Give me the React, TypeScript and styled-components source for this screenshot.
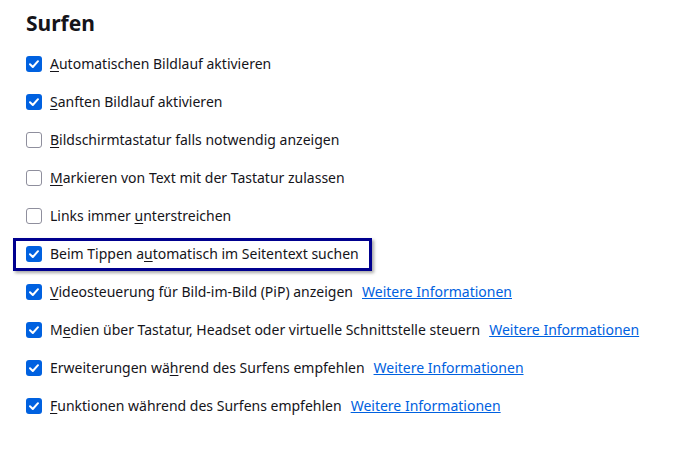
import React from 'react'
import styled, { createGlobalStyle } from 'styled-components'

const GlobalStyle = createGlobalStyle`
  html, body {
    margin: 0;
    padding: 0;
    background: #ffffff;
  }
  body {
    font-family: "Noto Sans", "Open Sans", sans-serif;
    color: #15141a;
  }
`

type Item = {
  label: string
  at: number // index of the access key letter
  checked: boolean
  link?: boolean
  focused?: boolean
}

const items: Item[] = [
  { label: 'Automatischen Bildlauf aktivieren', at: 0, checked: true },
  { label: 'Sanften Bildlauf aktivieren', at: 0, checked: true },
  { label: 'Bildschirmtastatur falls notwendig anzeigen', at: 0, checked: false },
  { label: 'Markieren von Text mit der Tastatur zulassen', at: 0, checked: false },
  { label: 'Links immer unterstreichen', at: 12, checked: false },
  { label: 'Beim Tippen automatisch im Seitentext suchen', at: 13, checked: true, focused: true },
  { label: 'Videosteuerung für Bild-im-Bild (PiP) anzeigen', at: 0, checked: true, link: true },
  { label: 'Medien über Tastatur, Headset oder virtuelle Schnittstelle steuern', at: 1, checked: true, link: true },
  { label: 'Erweiterungen während des Surfens empfehlen', at: 16, checked: true, link: true },
  { label: 'Funktionen während des Surfens empfehlen', at: 0, checked: true, link: true },
]

export default function App() {
  return (
    <>
      <GlobalStyle />
      <Page>
        <Heading>Surfen</Heading>
        <List>
          {items.map((item, i) => (
            <Row key={i}>
              <Option $focused={item.focused}>
                <Box $checked={item.checked}>
                  {item.checked && (
                    <svg width="12" height="12" viewBox="0 0 12 12">
                      <path d="M2 6.3 L4.8 9 L10 3.2" fill="none" stroke="#fff" strokeWidth="2" strokeLinecap="round" strokeLinejoin="round" />
                    </svg>
                  )}
                </Box>
                <Label>
                  {item.label.slice(0, item.at)}
                  <AccessKey>{item.label.charAt(item.at)}</AccessKey>
                  {item.label.slice(item.at + 1)}
                </Label>
              </Option>
              {item.link && <MoreLink href="#">Weitere Informationen</MoreLink>}
            </Row>
          ))}
        </List>
      </Page>
    </>
  )
}

const Page = styled.div`
  width: 679px;
  height: 456px;
  padding: 10px 0 0 26px;
  box-sizing: border-box;
  overflow: hidden;
`

const Heading = styled.h1`
  margin: 0;
  font-size: 21px;
  font-weight: 700;
  line-height: 26px;
  color: #15141a;
`

const List = styled.div`
  display: flex;
  flex-direction: column;
  margin-top: 17px;
  gap: 16px;
`

const Row = styled.div`
  display: flex;
  align-items: center;
  height: 22px;
`

const Option = styled.div<{ $focused?: boolean }>`
  display: flex;
  align-items: center;
  gap: 8px;
  position: relative;

  ${p => p.$focused && `
    &::before {
      content: '';
      position: absolute;
      left: -13px;
      top: -6px;
      right: -13px;
      bottom: -7px;
      border: 3.5px solid #00008f;
      box-shadow: 2px 2px 3px rgba(0,0,0,.35);
      pointer-events: none;
    }
  `}
`

const Box = styled.span<{ $checked: boolean }>`
  width: 16px;
  height: 16px;
  box-sizing: border-box;
  border-radius: 3px;
  display: flex;
  align-items: center;
  justify-content: center;
  flex-shrink: 0;
  background: ${p => (p.$checked ? '#0061e0' : '#fff')};
  border: ${p => (p.$checked ? 'none' : '1.5px solid #8f8f9d')};
`

const Label = styled.span`
  font-size: 14px;
  line-height: 20px;
  white-space: nowrap;
`

const AccessKey = styled.span`
  text-decoration: underline;
  text-underline-offset: 2px;
`

const MoreLink = styled.a`
  margin-left: 9px;
  font-size: 14px;
  line-height: 20px;
  color: #0061e0;
  text-decoration: underline;
  white-space: nowrap;
`
